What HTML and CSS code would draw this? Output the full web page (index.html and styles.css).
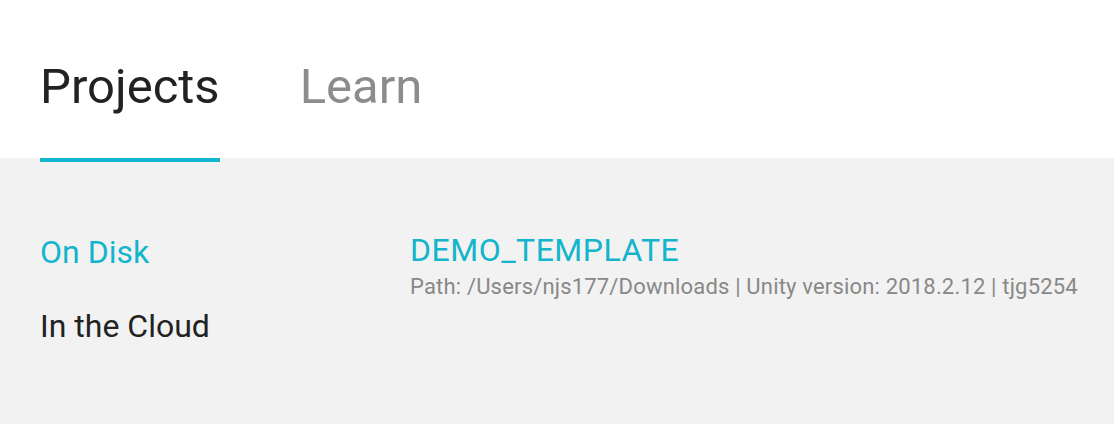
FILE: index.html
```html
<!DOCTYPE html>
<html>
<head>
    <meta http-equiv="Content-Type" content="text/html;charset=UTF-8"/>
    <title>Projects</title>
    <link rel="stylesheet" href="styles.css">
</head>
<body>
<div class="header">
    <div class="tab active">Projects</div>
    <div class="tab">Learn</div>
</div>
<div class="content">
    <div class="sidebar">
        <div class="side-item active">On Disk</div>
        <div class="side-item">In the Cloud</div>
    </div>
    <div class="projects">
        <div class="project">
            <div class="project-name">DEMO_TEMPLATE</div>
            <div class="project-info">Path: /Users/njs177/Downloads | Unity version: 2018.2.12 | tjg5254</div>
        </div>
    </div>
</div>
</body>
</html>
```

FILE: styles.css
```css
body {
    font-family: Roboto, "Noto Sans", sans-serif;
    margin: 0;
    padding: 0;
    height: 100vh;
    display: flex;
    flex-direction: column;
    background-color: #f2f2f2;
}

.header {
    background: #fff;
    height: 158px;
    display: flex;
    padding: 0 40px;
    gap: 80px;
}

.tab {
    font-size: 49px;
    color: #8c8c8c;
    padding-top: 58px;
    height: 104px;
    box-sizing: border-box;
    position: relative;
}

.tab.active {
    color: #222;
}

.tab.active::after {
    content: "";
    position: absolute;
    left: 0;
    right: 0;
    top: 158px;
    height: 4px;
    background: #12b5cc;
}

.content {
    flex: 1;
    display: flex;
    padding: 0 20px 0 40px;
}

.sidebar {
    width: 370px;
    padding-top: 75px;
}

.side-item {
    font-size: 32px;
    color: #222;
    height: 74px;
}

.side-item.active {
    color: #12b5cc;
}

.projects {
    flex: 1;
    padding-top: 73px;
}

.project-name {
    font-size: 32px;
    letter-spacing: 0.5px;
    color: #12b5cc;
}

.project-info {
    font-size: 22px;
    letter-spacing: 0.18px;
    color: #888;
    margin-top: 5px;
    white-space: nowrap;
}
```
